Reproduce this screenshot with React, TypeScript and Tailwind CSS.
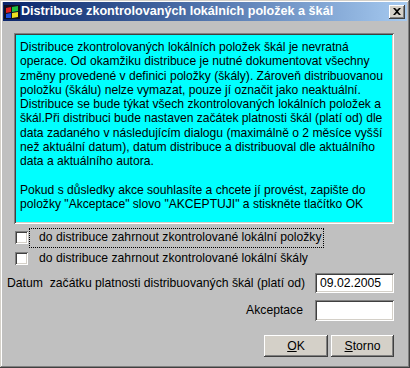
import React from "react";

const lines = [
  "Distribuce zkontrolovaných lokálních položek škál je nevratná",
  "operace. Od okamžiku distribuce je nutné dokumentovat všechny",
  "změny provedené v definici položky (škály). Zároveň distribuovanou",
  "položku (škálu) nelze vymazat, pouze jí označit jako neaktuální.",
  "Distribuce se bude týkat všech zkontrolovaných lokálních položek a",
  "škál.Při distribuci bude nastaven začátek platnosti škál (platí od) dle",
  "data zadaného v následujícím dialogu (maximálně o 2 měsíce vyšší",
  "než aktuální datum), datum distribuce a distribuoval dle aktuálního",
  "data a aktuálního autora.",
  "\u00a0",
  "Pokud s důsledky akce souhlasíte a chcete jí provést, zapište do",
  "položky \"Akceptace\" slovo \"AKCEPTUJI\" a stiskněte tlačítko OK",
];

const sunken =
  "shadow-[inset_1px_1px_0_#808080,inset_-1px_-1px_0_#ffffff,inset_2px_2px_0_#404040,inset_-2px_-2px_0_#d4d0c8]";
const raised =
  "shadow-[inset_-1px_-1px_0_#404040,inset_1px_1px_0_#ffffff,inset_-2px_-2px_0_#808080,inset_2px_2px_0_#d4d0c8]";

function Checkbox() {
  return <div className={`w-[13px] h-[13px] bg-white shrink-0 ${sunken}`} />;
}

export default function App() {
  return (
    <div
      className="w-[410px] h-[368px] bg-[#c0c0c0] flex flex-col text-black shadow-[inset_-1px_-1px_0_#404040,inset_1px_1px_0_#d4d0c8,inset_-2px_-2px_0_#808080,inset_2px_2px_0_#ffffff]"
      style={{ fontFamily: '"Liberation Sans", Arial, sans-serif' }}
    >
      {/* Title bar */}
      <div className="mt-[2px] mx-[3px] h-[19px] flex items-center bg-gradient-to-r from-[#0a246a] to-[#a6caf0]">
        <svg width="16" height="16" viewBox="0 0 16 16" className="ml-[1px] shrink-0">
          <rect x="0" y="1" width="16" height="14" fill="#101020" />
          <polygon points="2,4 7,3 7,8 2,9" fill="#e02020" />
          <polygon points="8,3 14,2 14,7 8,8" fill="#20c040" />
          <polygon points="2,10 7,9 7,14 2,14" fill="#2050e0" />
          <polygon points="8,9 14,8 14,13 8,14" fill="#f0e020" />
        </svg>
        <span className="ml-[1px] text-white font-bold text-[12.6px] leading-none whitespace-nowrap">
          Distribuce zkontrolovaných lokálních položek a škál
        </span>
        <div className="flex-1" />
        <div
          className={`mr-[2px] w-[16px] h-[14px] bg-[#d4d0c8] flex items-center justify-center ${raised}`}
        >
          <svg width="8" height="7" viewBox="0 0 8 7">
            <path d="M0 0 L2 0 L4 2 L6 0 L8 0 L5 3.5 L8 7 L6 7 L4 5 L2 7 L0 7 L3 3.5 Z" fill="#000" />
          </svg>
        </div>
      </div>

      {/* Info box */}
      <div
        className={`mt-[12px] ml-[14px] w-[380px] h-[191px] bg-[#00ffff] pl-[6px] pt-[7px] text-[12.1px] leading-[14.3px] ${sunken}`}
      >
        {lines.map((l, i) => (
          <div key={i} className="whitespace-nowrap">
            {l}
          </div>
        ))}
      </div>

      {/* Checkboxes */}
      <div className="mt-[3px] h-[21px] ml-[15px] flex items-center text-[12.2px]">
        <Checkbox />
        <span className="ml-[1px] pl-[9px] pr-[1px] h-[20px] flex items-center border border-dotted border-black whitespace-nowrap">
          do distribuce zahrnout zkontrolované lokální položky
        </span>
      </div>
      <div className="h-[21px] ml-[15px] flex items-center text-[12.2px]">
        <Checkbox />
        <span className="ml-[11px] whitespace-nowrap">
          do distribuce zahrnout zkontrolované lokální škály
        </span>
      </div>

      {/* Date row */}
      <div className="mt-[4px] h-[20px] flex items-center text-[12.2px]">
        <span className="ml-[7px] whitespace-nowrap">
          Datum&nbsp; začátku platnosti distribuovaných škál (platí od)
        </span>
        <div className="flex-1" />
        <div
          className={`mr-[16px] w-[79px] h-[20px] bg-white flex items-center pl-[5px] ${sunken}`}
        >
          09.02.2005
        </div>
      </div>

      {/* Akceptace row */}
      <div className="mt-[7px] h-[21px] flex items-center justify-end text-[12.2px]">
        <span className="mr-[12px]">Akceptace</span>
        <div className={`mr-[16px] w-[79px] h-[21px] bg-white ${sunken}`} />
      </div>

      {/* Buttons */}
      <div className="mt-[14px] flex justify-end gap-[3px] pr-[16px] text-[12.2px]">
        <div className={`w-[64px] h-[22px] bg-[#d4d0c8] flex items-center justify-center ${raised}`}>
          <span>
            <span className="underline">O</span>K
          </span>
        </div>
        <div className={`w-[63px] h-[22px] bg-[#d4d0c8] flex items-center justify-center ${raised}`}>
          <span>
            <span className="underline">S</span>torno
          </span>
        </div>
      </div>
    </div>
  );
}
